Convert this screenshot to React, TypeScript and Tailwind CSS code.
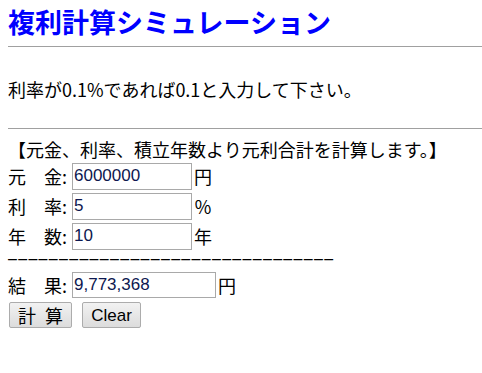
const jp = "font-['Noto_Sans_CJK_JP',sans-serif]";
const latin = "font-['Liberation_Sans','Noto_Sans_CJK_JP',sans-serif]";

type Field = { label: string; value: string; unit: string; width: string };

const fields: Field[] = [
  { label: "元　金", value: "6000000", unit: "円", width: "w-[120px]" },
  { label: "利　率", value: "5", unit: "％", width: "w-[120px]" },
  { label: "年　数", value: "10", unit: "年", width: "w-[120px]" },
];

function Row({ label, value, unit, width, className = "" }: Field & { className?: string }) {
  return (
    <div className={`flex h-[30px] items-center ${className}`}>
      <span className={`${jp} inline-block w-[64px] text-[18px] leading-none text-black`}>
        {label}:
      </span>
      <input
        readOnly
        value={value}
        className={`${latin} ${width} h-[27px] border border-[#a9a9a9] bg-white px-px text-[17px] leading-none text-[#0d1850] outline-none`}
      />
      <span className={`${jp} ml-[2px] text-[18px] leading-none text-black`}>{unit}</span>
    </div>
  );
}

export default function App() {
  return (
    <div className="min-h-[373px] w-[482px] overflow-hidden bg-white pl-2">
      {/* title */}
      <h2 className={`${jp} mt-[6px] h-[32px] text-[27px] font-bold leading-[32px] text-[#0000ff]`}>
        複利計算シミュレーション
      </h2>
      <div className="mt-[8px] h-px bg-[#a0a0a0]" />

      <p className={`${jp} mt-[30px] text-[18px] leading-[24px] text-black`}>
        利率が0.1%であれば0.1と入力して下さい。
      </p>
      <div className="mt-[27px] h-px bg-[#a0a0a0]" />

      <div className={`${jp} mt-[8px] whitespace-nowrap text-[18px] leading-[24px] text-black`}>
        【元金、利率、積立年数より元利合計を計算します。】
      </div>

      {fields.map((f) => (
        <Row key={f.label} {...f} />
      ))}

      <div className={`${latin} h-[16px] whitespace-nowrap text-[16px] leading-[16px] tracking-[1.3px] text-black`}>
        {"–".repeat(32)}
      </div>

      <Row label="結　果" value="9,773,368" unit="円" width="w-[144px]" className="mt-[3px] [&_input]:h-[26px]" />

      <div className="mt-[2px] flex items-center gap-[10px] pl-px">
        <button
          className={`${jp} h-[26px] w-[63px] rounded-[2px] border border-[#acacac] bg-gradient-to-b from-[#f2f2f2] to-[#dcdcdc] text-[18px] leading-none text-black [word-spacing:5px]`}
        >
          計 算
        </button>
        <button
          className={`${latin} h-[26px] w-[59px] rounded-[2px] border border-[#acacac] bg-gradient-to-b from-[#f2f2f2] to-[#dcdcdc] text-[17px] leading-none text-black`}
        >
          Clear
        </button>
      </div>
    </div>
  );
}
